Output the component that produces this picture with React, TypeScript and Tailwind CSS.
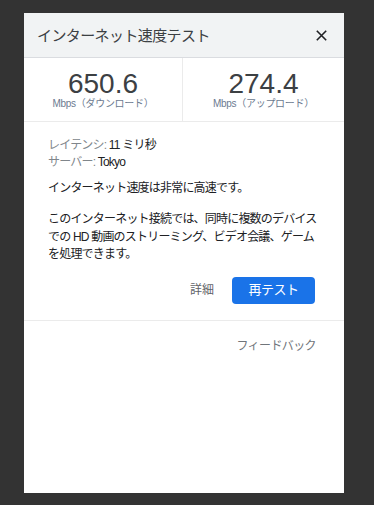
import React from "react";

const font = { fontFamily: '"Liberation Sans", "Noto Sans CJK JP", sans-serif' };

export default function App() {
  return (
    <div className="w-[374px] h-[505px] bg-[#333333] pt-[13px] pl-[24px]" style={font}>
      <div className="w-[320px] h-[480px] bg-white flex flex-col">
        <div className="h-[45px] bg-[#f1f3f4] border-b border-[#dadce0] flex items-center justify-between pl-[13px] pr-[17px]">
          <span className="text-[15px] text-[#3c4043] tracking-[-0.6px] leading-none">インターネット速度テスト</span>
          <svg width="11" height="11" viewBox="0 0 11 11">
            <path d="M0.8 0.8L10.2 10.2M10.2 0.8L0.8 10.2" stroke="#202124" strokeWidth="1.6" />
          </svg>
        </div>
        <div className="h-[64px] grid grid-cols-[159px_1fr] border-b border-[#ebebeb]">
          <div className="border-r border-[#ebebeb] flex flex-col items-center pt-[11px]">
            <span className="text-[28px] leading-[29px] text-[#3c4043]">650.6</span>
            <span className="text-[10px] leading-[12px] text-[#6b7a90] tracking-[-0.3px]">Mbps（ダウンロード）</span>
          </div>
          <div className="flex flex-col items-center pt-[11px]">
            <span className="text-[28px] leading-[29px] text-[#3c4043]">274.4</span>
            <span className="text-[10px] leading-[12px] text-[#6b7a90] tracking-[-0.3px]">Mbps（アップロード）</span>
          </div>
        </div>
        <div className="px-[24px] pt-[15px] text-[12px] tracking-[-0.8px]">
          <div className="leading-[17px]">
            <span className="text-[#80868b]">レイテンシ: </span>
            <span className="text-[#202124]">11 ミリ秒</span>
          </div>
          <div className="leading-[17px]">
            <span className="text-[#80868b]">サーバー: </span>
            <span className="text-[#202124]">Tokyo</span>
          </div>
          <div className="mt-[9px] leading-[17px] text-[#202124]">インターネット速度は非常に高速です。</div>
          <div className="mt-[14px] leading-[17.5px] text-[#202124] whitespace-nowrap">
            <div>このインターネット接続では、同時に複数のデバイス</div>
            <div>での HD 動画のストリーミング、ビデオ会議、ゲーム</div>
            <div>を処理できます。</div>
          </div>
        </div>
        <div className="flex items-center justify-end gap-[18px] pr-[29px] mt-[13px]">
          <span className="text-[12px] text-[#5f6368]">詳細</span>
          <button className="w-[83px] h-[27px] rounded-[4px] bg-[#1a73e8] text-white text-[13px] tracking-[-0.5px]">再テスト</button>
        </div>
        <div className="mt-[16px] border-t border-[#ebebeb]" />
        <div className="flex justify-end pr-[28px] pt-[16px]">
          <span className="text-[12px] text-[#70757a] tracking-[-0.6px]">フィードバック</span>
        </div>
      </div>
    </div>
  );
}
